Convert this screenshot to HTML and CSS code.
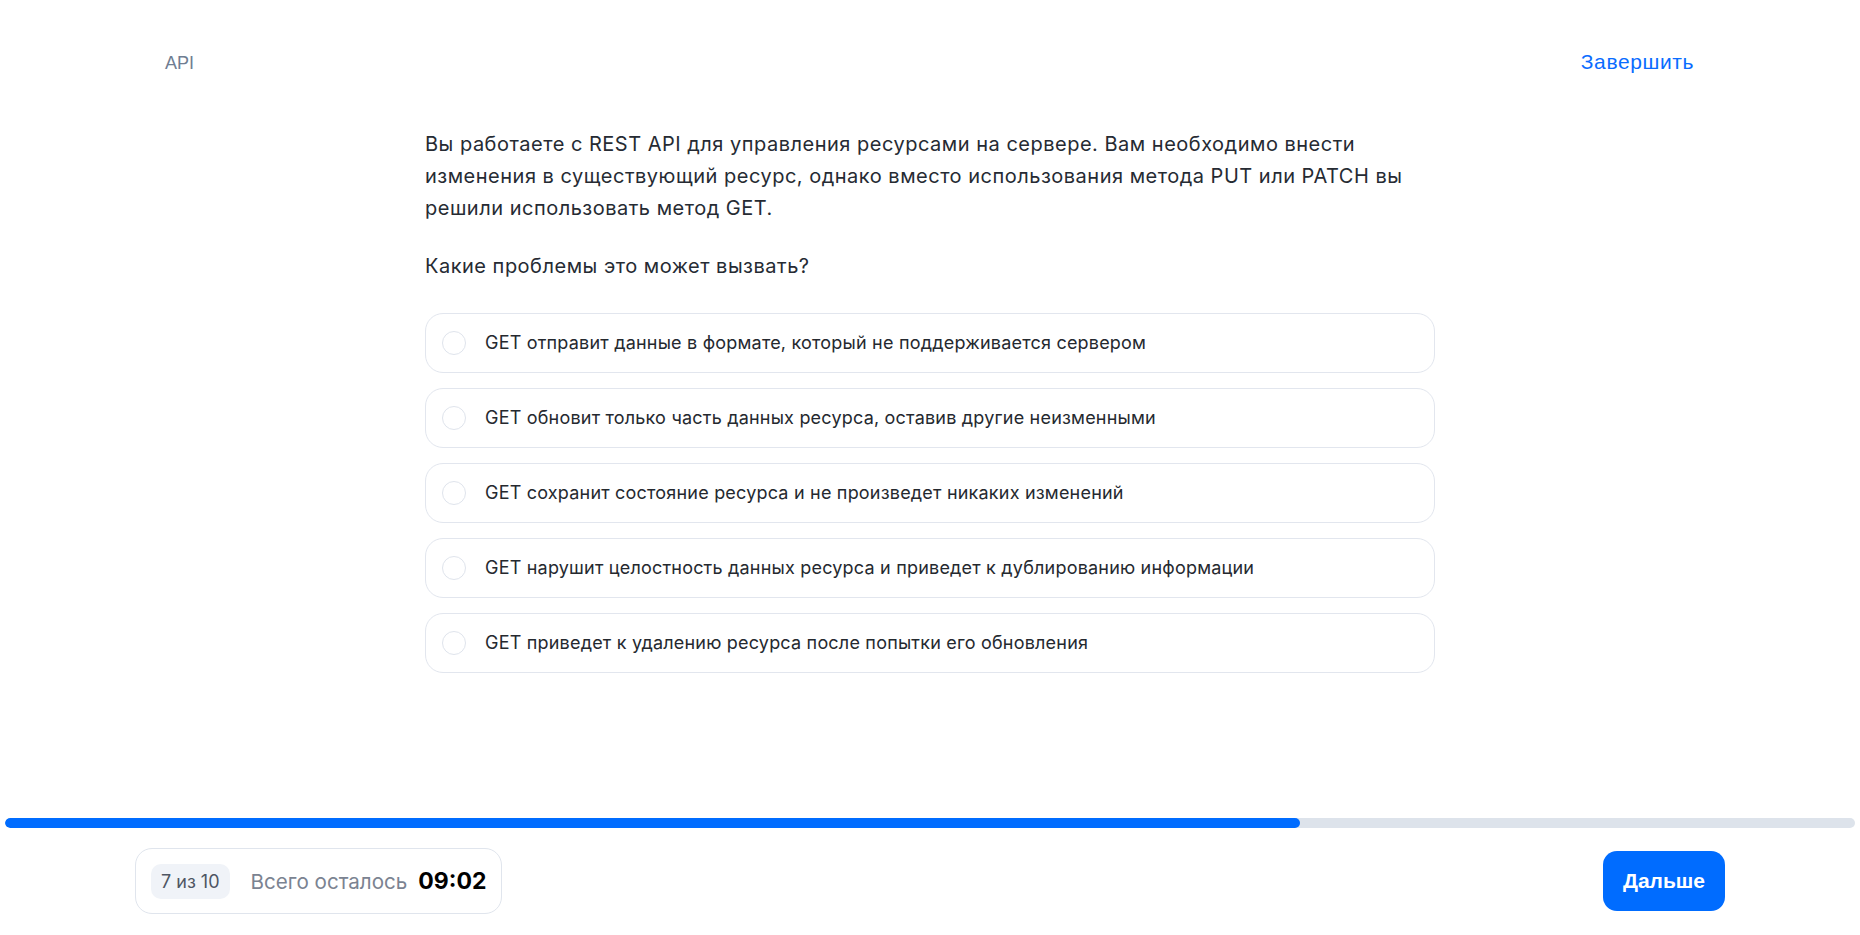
FILE: index.html
```html
<!DOCTYPE html>
<html lang="ru">
<head>
<meta charset="utf-8">
<title>API</title>
<link rel="stylesheet" href="styles.css">
</head>
<body>
<div class="page">
  <header class="header">
    <span class="topic">API</span>
    <a class="finish" href="#">Завершить</a>
  </header>
  <main class="main">
    <div class="question">
      <p class="q-text">Вы работаете с REST API для управления ресурсами на сервере. Вам необходимо внести изменения в существующий ресурс, однако вместо использования метода PUT или PATCH вы решили использовать метод GET.</p>
      <p class="q-ask">Какие проблемы это может вызвать?</p>
      <div class="options">
        <label class="option"><span class="radio"></span><span class="opt-text">GET отправит данные в формате, который не поддерживается сервером</span></label>
        <label class="option"><span class="radio"></span><span class="opt-text">GET обновит только часть данных ресурса, оставив другие неизменными</span></label>
        <label class="option"><span class="radio"></span><span class="opt-text">GET сохранит состояние ресурса и не произведет никаких изменений</span></label>
        <label class="option"><span class="radio"></span><span class="opt-text">GET нарушит целостность данных ресурса и приведет к дублированию информации</span></label>
        <label class="option"><span class="radio"></span><span class="opt-text">GET приведет к удалению ресурса после попытки его обновления</span></label>
      </div>
    </div>
  </main>
  <footer class="footer">
    <div class="progress"><div class="progress-fill" style="width:70%"></div></div>
    <div class="bottom">
      <div class="timer">
        <span class="badge">7 из 10</span>
        <span class="left-label">Всего осталось</span>
        <span class="time">09:02</span>
      </div>
      <button class="next">Дальше</button>
    </div>
  </footer>
</div>
</body>
</html>
```
FILE: styles.css
```css
* { box-sizing: border-box; }
html, body { margin: 0; padding: 0; background: #fff; }
body { font-family: Inter, "Noto Sans", sans-serif; color: #25292f; }
.page { height: 100vh; display: flex; flex-direction: column; }

.header {
  display: flex;
  justify-content: space-between;
  align-items: baseline;
  padding: 50px 166px 0 165px;
  font-family: "Liberation Sans", Arial, sans-serif;
  font-size: 20px;
  line-height: 23px;
}
.topic { color: #6f7d92; font-size: 18px; }
.finish { color: #0a6cff; text-decoration: none; font-size: 21px; letter-spacing: 0.6px; }

.main { flex: 1; display: flex; justify-content: center; }
.question { width: 1010px; padding-top: 53px; }
.q-text { margin: 0; font-size: 20px; line-height: 32px; color: #262b33; letter-spacing: 0.5px; }
.q-ask { margin: 26px 0 0; font-size: 20px; line-height: 32px; color: #262b33; letter-spacing: 0.5px; }

.options { margin-top: 31px; display: flex; flex-direction: column; gap: 15px; }
.option {
  height: 60px;
  border: 1px solid #e2e6ee;
  border-radius: 18px;
  display: flex;
  align-items: center;
  padding-left: 16px;
  cursor: pointer;
}
.radio {
  width: 24px; height: 24px;
  border: 1px solid #dfe4ec;
  border-radius: 50%;
  flex: none;
}
.opt-text { margin-left: 19px; font-size: 18px; color: #25292f; letter-spacing: 0.2px; position: relative; top: -1px; }

.footer { padding-bottom: 21px; }
.progress { height: 10px; margin: 0 5px; background: #dde3eb; border-radius: 5px; overflow: hidden; }
.progress-fill { height: 100%; background: #006cff; border-radius: 5px; }

.bottom {
  margin-top: 20px;
  padding: 0 135px;
  display: flex;
  justify-content: space-between;
  align-items: center;
}
.timer {
  height: 66px;
  border: 1px solid #e0e5ed;
  border-radius: 17px;
  display: flex;
  align-items: center;
  padding: 0 15px;
}
.badge {
  height: 35px;
  padding: 0 10px;
  background: #f0f3f8;
  border-radius: 10px;
  display: flex;
  align-items: center;
  font-size: 18px;
  color: #4e5663;
}
.left-label { margin-left: 21px; font-size: 20.6px; color: #7b8391; }
.time { margin-left: 11px; font-size: 23px; font-weight: 700; color: #000; }

.next {
  height: 60px;
  width: 122px;
  border: none;
  border-radius: 14px;
  background: #006cff;
  color: #fff;
  font-family: "Liberation Sans", Arial, sans-serif;
  font-weight: 700;
  font-size: 21px;
  cursor: pointer;
}
```
